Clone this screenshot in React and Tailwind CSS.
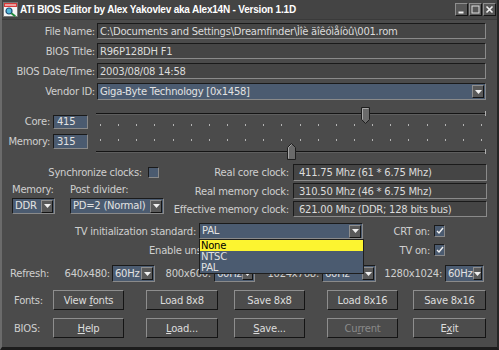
import { Fragment } from 'react'

const FONT = { fontFamily: '"DejaVu Sans", Verdana, sans-serif' }
const TITLE_FONT = { fontFamily: '"Liberation Sans", Arial, sans-serif' }

const SUNKEN = 'border border-t-[#1a1a1a] border-l-[#1a1a1a] border-b-[#8a8a8a] border-r-[#8a8a8a]'
const RAISED = 'border border-t-[#8e8e8e] border-l-[#8e8e8e] border-b-[#141414] border-r-[#141414]'

function Arrow() {
  return (
    <span className={`flex items-center justify-center w-[12px] h-[13px] bg-[#595959] ${RAISED}`}>
      <svg width="7" height="4" viewBox="0 0 7 4"><path d="M0 0h7L3.5 4z" fill="#f0f0f0" /></svg>
    </span>
  )
}

function Combo({ value, className = '' }) {
  return (
    <div className={`flex items-center justify-between bg-[#4b5b70] ${SUNKEN} pl-[2px] pr-[1px] ${className}`}>
      <span className="text-[#e2e2e2] leading-none">{value}</span>
      <Arrow />
    </div>
  )
}

function Check({ className = '' }) {
  return (
    <span className={`flex items-center justify-center w-[11px] h-[12px] bg-[#4b5b70] ${SUNKEN} ${className}`}>
      <svg width="8" height="8" viewBox="0 0 8 8"><path d="M1 4l2 2 4-5" stroke="#f2f2f2" strokeWidth="1.4" fill="none" /></svg>
    </span>
  )
}

function Box({ className = '' }) {
  return <span className={`block w-[11px] h-[11px] bg-[#4b5b70] ${SUNKEN} ${className}`} />
}

function Btn({ children, w, ml, disabled }) {
  return (
    <div className={`flex items-center justify-center h-[20px] bg-[#4c4c4c] ${RAISED} ${w} ${ml} ${disabled ? 'text-[#8a8a8a]' : 'text-[#dcdcdc]'}`}>
      <span className="whitespace-pre">{children}</span>
    </div>
  )
}

function Field({ children, className = '' }) {
  return (
    <div className={`flex items-center bg-[#454545] ${SUNKEN} px-[2px] text-[#dcdcdc] ${className}`}>{children}</div>
  )
}

function Thumb({ down }) {
  return (
    <svg width="9" height="17" viewBox="0 0 9 17">
      {down ? (
        <>
          <path d="M0.5 0.5h8v12l-4 4-4-4z" fill="#6a6a6a" stroke="#1e1e1e" />
          <path d="M1.5 1.5v11" stroke="#a8a8a8" />
          <path d="M1.5 1.5h6" stroke="#a8a8a8" />
        </>
      ) : (
        <>
          <path d="M0.5 16.5h8v-12l-4-4-4 4z" fill="#6a6a6a" stroke="#1e1e1e" />
          <path d="M1.5 15.5v-11l3-3" stroke="#a8a8a8" fill="none" />
        </>
      )}
    </svg>
  )
}

const TICKS = Array.from({ length: 22 })

const INFO = [
  ['File Name:', 'C:\\Documents and Settings\\Dreamfinder\\Ìîè äîêóìåíòû\\001.rom'],
  ['BIOS Title:', 'R96P128DH F1'],
  ['BIOS Date/Time:', '2003/08/08 14:58'],
]

const CLOCKS = [
  ['Real core clock:', '411.75 Mhz (61 * 6.75 Mhz)', 'h-[17px]'],
  ['Real memory clock:', '310.50 Mhz (46 * 6.75 Mhz)', 'h-[16px]'],
  ['Effective memory clock:', '621.00 Mhz (DDR; 128 bits bus)', 'h-[16px]'],
]

export default function App() {
  return (
    <div className="w-[499px] h-[350px] overflow-hidden bg-[#4b4b4b] text-[10px] tracking-[-0.25px] text-[#cfcfcf] border-l-2 border-l-[#6b6b6b] border-r-2 border-r-[#262626] border-b-[3px] border-b-[#1c1c1c] flex flex-col" style={FONT}>

      {/* Title bar */}
      <div className="h-[20px] flex items-center bg-[#444444] border-b border-b-[#3a3a3a]">
        <svg width="15" height="15" viewBox="0 0 15 15" className="ml-[1px]">
          <rect x="0.5" y="0.5" width="14" height="14" fill="#f4f4f4" stroke="#777" />
          <rect x="1" y="1" width="13" height="4" fill="#d83a3a" />
          <path d="M2 3h11" stroke="#fff" />
          <circle cx="6" cy="9" r="3" fill="#55b7d8" stroke="#1d4f7a" strokeWidth="1.2" />
          <path d="M8.3 11.2l4 3" stroke="#1e8a3a" strokeWidth="2" />
        </svg>
        <span className="ml-[2px] font-bold text-white text-[10px] tracking-[-0.2px]" style={TITLE_FONT}>ATi BIOS Editor by Alex Yakovlev aka Alex14N - Version 1.1D</span>
        <div className="ml-auto mr-[1px] flex gap-[1px]">
          {['min', 'max', 'close'].map(k => (
            <span key={k} className={`flex items-center justify-center w-[13px] h-[13px] bg-[#565656] ${RAISED}`}>
              <svg width="9" height="9" viewBox="0 0 9 9">
                {k === 'min' && <path d="M1.5 7.5h5" stroke="#eee" strokeWidth="2" />}
                {k === 'max' && <rect x="1" y="1" width="7" height="7" fill="none" stroke="#ddd" />}
                {k === 'close' && <path d="M1.5 1.5l6 6M7.5 1.5l-6 6" stroke="#eee" strokeWidth="1.6" />}
              </svg>
            </span>
          ))}
        </div>
      </div>

      {/* Info fields */}
      <div className="mt-[3px] flex flex-col gap-[4px]">
        {INFO.map(([l, v]) => (
          <div key={l} className="flex items-center h-[16px]">
            <span className="w-[93px] text-right">{l}</span>
            <Field className="ml-[2px] w-[389px] h-[16px]">{v}</Field>
          </div>
        ))}
        <div className="flex items-center h-[17px]">
          <span className="w-[93px] text-right">Vendor ID:</span>
          <Combo value="Giga-Byte Technology [0x1458]" className="ml-[2px] w-[389px] h-[17px]" />
        </div>
      </div>

      {/* Clock sliders */}
      <div className="mt-[7px] flex">
        <div className="w-[86px] flex flex-col items-end">
          <div className="mt-[7px] flex items-center gap-[3px]">
            <span>Core:</span>
            <span className={`w-[35px] h-[14px] flex items-center pl-[3px] bg-[#4b5b70] text-[#e2e2e2] ${SUNKEN}`}>415</span>
          </div>
          <div className="mt-[5px] flex items-center gap-[3px]">
            <span>Memory:</span>
            <span className={`w-[35px] h-[15px] flex items-center pl-[3px] bg-[#4b5b70] text-[#e2e2e2] ${SUNKEN}`}>315</span>
          </div>
        </div>
        <div className="ml-[8px] w-[390px] h-[54px] relative">
          <div className="mt-[6px] h-[2px] bg-[#141414] border-b border-b-[#5e5e5e]" />
          <div className="mt-[9px] pl-[4px] pr-[4px] flex justify-between">
            {TICKS.map((_, i) => <span key={i} className="w-[1px] h-[2px] bg-[#b4b4b4]" />)}
          </div>
          <div className="mt-[13px] pl-[4px] pr-[4px] flex justify-between">
            {TICKS.map((_, i) => <span key={i} className="w-[1px] h-[2px] bg-[#b4b4b4]" />)}
          </div>
          <div className="mt-[10px] h-[2px] bg-[#141414] border-b border-b-[#5e5e5e]" />
          <span className="absolute right-0 top-[4px] w-[1px] h-[5px] bg-[#b0b0b0]" />
          <span className="absolute right-0 top-[42px] w-[1px] h-[5px] bg-[#b0b0b0]" />
          <div className="absolute left-[265px] top-0"><Thumb down /></div>
          <div className="absolute left-[191px] top-[36px]"><Thumb /></div>
        </div>
      </div>

      {/* Sync + clocks */}
      <div className="mt-[3px] flex">
        <div className="w-[165px] flex flex-col">
          <div className="h-[17px] flex items-center justify-end pr-[8px] gap-[6px]">
            <span>Synchronize clocks:</span>
            <Box />
          </div>
          <div className="pl-[10px] flex">
            <div className="w-[58px] flex flex-col">
              <span className="h-[14px] flex items-center mt-[1px]">Memory:</span>
              <Combo value="DDR" className="mt-[2px] w-[43px] h-[16px]" />
            </div>
            <div className="flex flex-col">
              <span className="h-[14px] flex items-center mt-[1px]">Post divider:</span>
              <Combo value="PD=2 (Normal)" className="mt-[2px] w-[94px] h-[16px]" />
            </div>
          </div>
        </div>
        <div className="grid grid-cols-[122px_194px] gap-x-[4px] gap-y-[2px]">
          {CLOCKS.map(([l, v, h]) => (
            <Fragment key={l}>
              <span className={`${h} flex items-center justify-end`}>{l}</span>
              <Field className={`${h} pl-[5px]`}>{v}</Field>
            </Fragment>
          ))}
        </div>
      </div>

      {/* TV */}
      <div className="mt-[6px] flex items-center h-[16px]">
        <span className="w-[194px] text-right">TV initialization standard:</span>
        <div className="ml-[3px] w-[164px] relative">
          <Combo value="PAL" className="w-[164px] h-[16px]" />
          <div className="absolute left-0 top-full w-[165px] h-[35px] z-10 bg-[#4b5b70] border border-[#1e1e1e] text-[#e2e2e2] flex flex-col">
            <span className="h-[11px] leading-[11px] bg-[#fcf430] text-black pl-[1px]">None</span>
            <span className="h-[11px] leading-[11px] pl-[1px]">NTSC</span>
            <span className="h-[11px] leading-[11px] pl-[1px]">PAL</span>
          </div>
        </div>
        <span className="w-[67px] text-right">CRT on:</span>
        <Check className="ml-[4px]" />
      </div>
      <div className="mt-[4px] flex items-center h-[14px]">
        <span className="ml-[147px] w-[221px] whitespace-nowrap">Enable unsupported modes:</span>
        <span className="w-[60px] text-right whitespace-nowrap">TV on:</span>
        <Check className="ml-[4px]" />
      </div>

      {/* Refresh */}
      <div className="mt-[8px] flex items-center h-[17px]">
        <span className="ml-[8px] w-[52px]">Refresh:</span>
        <span className="w-[48px] text-right">640x480:</span>
        <Combo value="60Hz" className="ml-[2px] w-[43px] h-[17px]" />
        <span className="w-[56px] text-right">800x600:</span>
        <Combo value="60Hz" className="ml-[3px] w-[41px] h-[17px]" />
        <span className="w-[64px] text-right">1024x768:</span>
        <Combo value="60Hz" className="ml-[3px] w-[54px] h-[17px]" />
        <span className="w-[66px] text-right">1280x1024:</span>
        <Combo value="60Hz" className="ml-[3px] w-[39px] h-[17px]" />
      </div>

      {/* Fonts */}
      <div className="mt-[8px] flex items-center">
        <span className="w-[51px] pl-[12px]">Fonts:</span>
        <Btn w="w-[71px]">View <u>f</u>onts</Btn>
        <Btn w="w-[72px]" ml="ml-[22px]">Load 8x8</Btn>
        <Btn w="w-[71px]" ml="ml-[16px]">Save 8x8</Btn>
        <Btn w="w-[71px]" ml="ml-[22px]">Load 8x16</Btn>
        <Btn w="w-[73px]" ml="ml-[15px]">Save 8x16</Btn>
      </div>

      {/* BIOS */}
      <div className="mt-[8px] flex items-center">
        <span className="w-[51px] pl-[12px]">BIOS:</span>
        <Btn w="w-[71px]"><u>H</u>elp</Btn>
        <Btn w="w-[72px]" ml="ml-[22px]"><u>L</u>oad...</Btn>
        <Btn w="w-[71px]" ml="ml-[16px]"><u>S</u>ave...</Btn>
        <Btn w="w-[71px]" ml="ml-[22px]" disabled>Cu<u>r</u>rent</Btn>
        <Btn w="w-[73px]" ml="ml-[15px]">E<u>x</u>it</Btn>
      </div>
    </div>
  )
}
